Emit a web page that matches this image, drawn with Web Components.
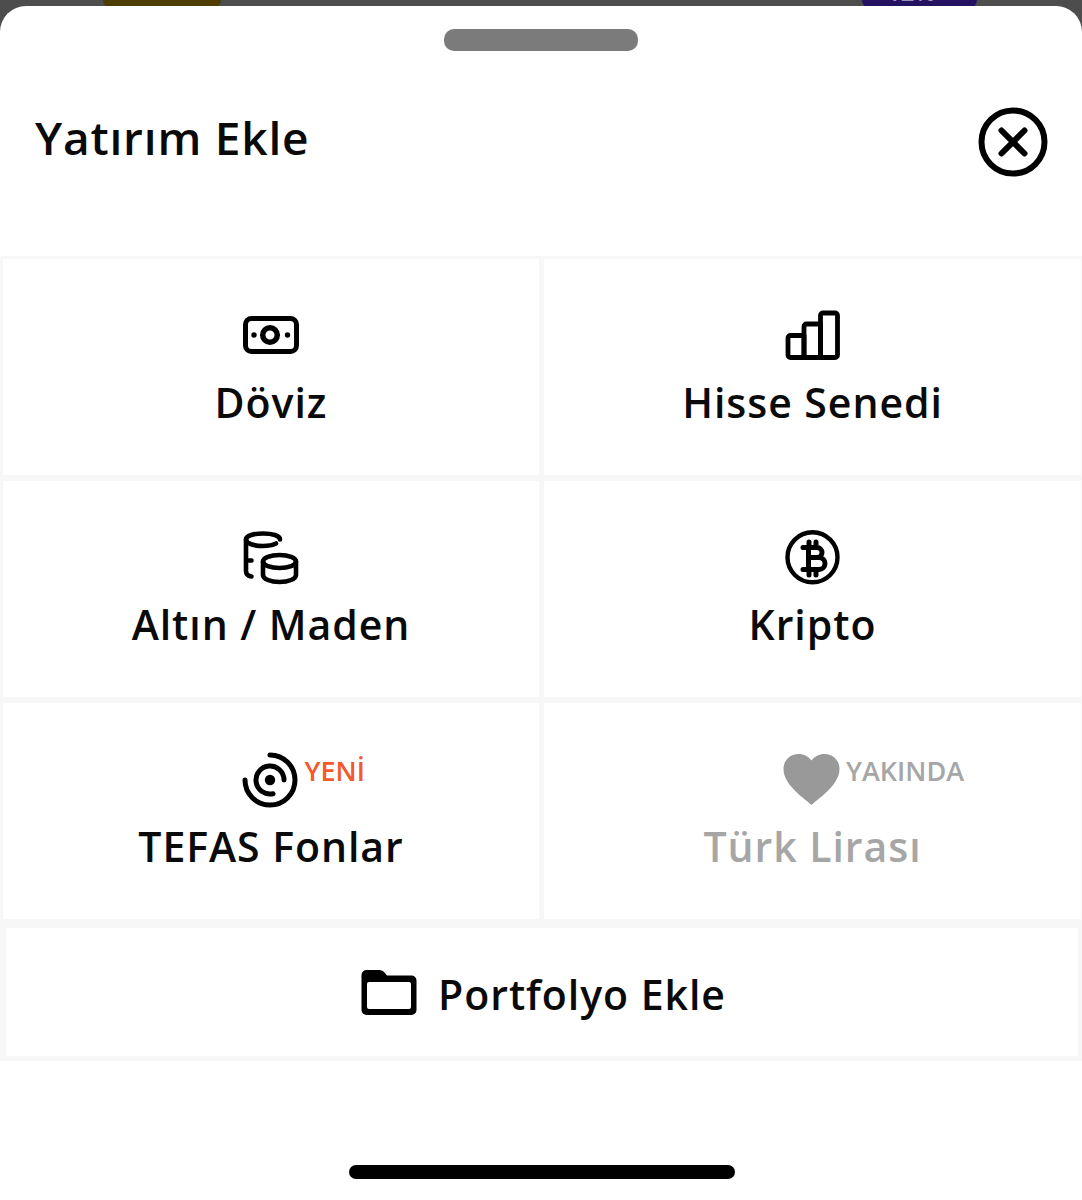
<!DOCTYPE html>
<html lang="tr"><head><meta charset="utf-8"><style>
html,body{margin:0;padding:0;background:#4d4d4d}
body{width:1082px;height:1200px;overflow:hidden;font-family:"Open Sans","Noto Sans",sans-serif}
</style></head><body>
<backdrop-peek></backdrop-peek>
<bottom-sheet>
  <sheet-header slot="header" title-text="Yatırım Ekle"></sheet-header>
  <asset-tile label="Döviz"><svg viewBox="0 0 56 56" width="56" height="56" fill="none" stroke="#000" stroke-width="5"><rect x="2.500" y="10.500" width="51" height="33" rx="6"/><circle cx="27" cy="27" r="7.300" stroke-width="5.500"/><circle cx="11" cy="27" r="2.700" fill="#000" stroke="none"/><circle cx="44.500" cy="27" r="2.700" fill="#000" stroke="none"/></svg></asset-tile>
  <asset-tile label="Hisse Senedi"><svg viewBox="0 0 56 56" width="56" height="56" fill="none" stroke="#000" stroke-width="4.800" stroke-linejoin="round"><path d="M3 30a2.500 2.500 0 0 1 2.500-2.500H19V49.500H5.500A2.500 2.500 0 0 1 3 47z"/><path d="M19 18.500a2.500 2.500 0 0 1 2.500-2.500H35.500V49.500H19z"/><path d="M35.500 7.500a2.500 2.500 0 0 1 2.500-2.500H50a2.500 2.500 0 0 1 2.500 2.500V47a2.500 2.500 0 0 1-2.500 2.500H35.500z"/></svg></asset-tile>
  <asset-tile label="Altın / Maden"><svg viewBox="0 0 56 56" width="56" height="56" fill="none" stroke="#000" stroke-width="4.600" stroke-linecap="round"><path d="M37 9.500C37 5.500 29 3.500 20 3.500S3 5.500 3 9.500s8 6.500 17 6.500c6 0 10-1 13-2.500"/><path d="M3 9.500V41c0 3 2 5 5.500 5.500M3 30.500h5.500"/><ellipse cx="36.500" cy="31.500" rx="16.500" ry="6.500"/><path d="M20 31.500V45c0 4 7.500 7 16.500 7S53 49 53 45V31.500"/></svg></asset-tile>
  <asset-tile label="Kripto"><svg viewBox="0 0 56 56" width="56" height="56" fill="none" stroke="#000"><circle cx="27.500" cy="27.300" r="25" stroke-width="4.400"/><path d="M18 17.500h14a5 5 0 0 1 0 10H24h10a6 6 0 0 1 0 12H18M23.500 17.500v22M24 12v5M31 12v5M24 40v5M31 40v5" stroke-width="5" stroke-linecap="round" stroke-linejoin="round"/></svg></asset-tile>
  <asset-tile label="TEFAS Fonlar" badge="YENİ" badge-color="#f4592b"><svg viewBox="0 0 56 56" width="56" height="56" fill="none" stroke="#000" stroke-width="5" stroke-linecap="round" style="overflow:visible"><path d="M27 3A25 25 0 1 1 2 28"/><path d="M41 28A14 14 0 1 0 30 41.700"/><circle cx="27" cy="28" r="5.200" fill="#000" stroke="none"/></svg></asset-tile>
  <asset-tile label="Türk Lirası" badge="YAKINDA" badge-color="#a6a6a6" muted><svg viewBox="0 0 56 56" width="56" height="56" style="overflow:visible"><path fill="#999" d="M26.500 53C22 48-1.500 34-1.500 17-1.500 8.500 5 2 13.500 2 19 2 23.500 4.500 26.500 8.500 29.500 4.500 34 2 39.500 2 48 2 54.500 8.500 54.500 17 54.500 34 31 48 26.500 53z"/></svg></asset-tile>
  <portfolio-row slot="footer" label="Portfolyo Ekle"><svg viewBox="0 0 56 46" width="56" height="46"><path fill="#000" fill-rule="evenodd" d="M5 0H18c3 0 4 1 5.500 2.500L26 5.500H50.500a5 5 0 0 1 5 5V40a5 5 0 0 1-5 5H5.500a5 5 0 0 1-5-5V5a5 5 0 0 1 5-5zM8 12a2 2 0 0 0-2 2V37a2 2 0 0 0 2 2H48a2 2 0 0 0 2-2V14a2 2 0 0 0-2-2z"/></svg></portfolio-row>
</bottom-sheet>
<script>
const T=(html)=>{const t=document.createElement('template');t.innerHTML=html;return t};
class Base extends HTMLElement{
  mount(t){const r=this.attachShadow({mode:'open'});r.appendChild(t.content.cloneNode(true));return r}
}
const peekT=T(`<style>:host{display:block;height:6px;position:relative;overflow:hidden}
.y,.p{position:absolute;top:0;height:8px}
.y{left:103px;width:118px;background:#4d3d00;border-radius:0 0 8px 8px}
.p{left:862px;width:115px;background:#23125f;border-radius:0 0 8px 8px}
.p span{position:absolute;left:25px;top:-22px;font:600 24px/28px "Open Sans",sans-serif;color:#9a94b8;white-space:nowrap}</style><div class="y"></div><div class="p"><span>12%</span></div>`);
customElements.define('backdrop-peek',class extends Base{connectedCallback(){this.mount(peekT)}});
const sheetT=T(`<style>
:host{display:block;height:1194px;background:#fff;border-radius:26px 26px 0 0;position:relative}
.handle{width:194px;height:22px;border-radius:10px;background:#7b7b7b;margin:0 auto;transform:translateY(23px)}
.head{height:250px;box-sizing:border-box;padding-top:0}
.grid{display:grid;grid-template-columns:536px 537px;column-gap:5px;row-gap:6px;background:#f7f7f7;padding:3px 0 2px 3px;width:1082px;box-sizing:border-box}
.foot{padding:7px 4px 5px 6px;background:#f7f7f7}
.home{position:absolute;left:349px;top:1159px;width:386px;height:14px;border-radius:7px;background:#000}
</style><div class="head"><div class="handle"></div><slot name="header"></slot></div><div class="grid"><slot></slot></div><div class="foot"><slot name="footer"></slot></div><div class="home"></div>`);
customElements.define('bottom-sheet',class extends Base{connectedCallback(){this.mount(sheetT)}});
const headT=T(`<style>:host{display:flex;justify-content:space-between;align-items:center;padding:73px 34px 0 35px}
h1{margin:0 0 4px;font:600 46px/60px "Open Sans",sans-serif;color:#0a0a0a;letter-spacing:.8px}
svg{display:block;margin-top:6px}</style><h1></h1><svg viewBox="0 0 70 70" width="70" height="70" fill="none" stroke="#000" stroke-linecap="round"><circle cx="35" cy="35" r="31.500" stroke-width="6"/><path d="M23.500 23.500l23 23M46.500 23.500l-23 23" stroke-width="6"/></svg>`);
customElements.define('sheet-header',class extends Base{connectedCallback(){this.mount(headT).querySelector('h1').textContent=this.getAttribute('title-text')}});
const tileT=T(`<style>:host{display:block;height:216px;background:#fff}
.c{display:flex;flex-direction:column;align-items:center;padding-top:49px}
.i{position:relative;height:56px;width:56px}
.b{position:absolute;left:61.500px;top:2px;font:600 27px/34px "Open Sans",sans-serif;white-space:nowrap}
.l{margin-top:11px;font:600 41px/54px "Open Sans",sans-serif;color:#0a0a0a;letter-spacing:.95px;white-space:nowrap}
:host([muted]) .l{color:#a6a6a6}
</style><div class="c"><div class="i"><slot></slot><span class="b"></span></div><div class="l"></div></div>`);
customElements.define('asset-tile',class extends Base{connectedCallback(){const r=this.mount(tileT);r.querySelector('.l').textContent=this.getAttribute('label');const b=r.querySelector('.b');b.textContent=this.getAttribute('badge')||'';b.style.color=this.getAttribute('badge-color')||''}});
const rowT=T(`<style>:host{display:flex;align-items:center;justify-content:center;gap:21px;height:128px;box-sizing:border-box;padding:3px 0 0 3px;background:#fff}
.l{font:600 41px/54px "Open Sans",sans-serif;color:#0a0a0a;letter-spacing:.95px}
::slotted(svg){display:block;margin-top:-2px}
</style><slot></slot><span class="l"></span>`);
customElements.define('portfolio-row',class extends Base{connectedCallback(){this.mount(rowT).querySelector('.l').textContent=this.getAttribute('label')}});
</script></body></html>
